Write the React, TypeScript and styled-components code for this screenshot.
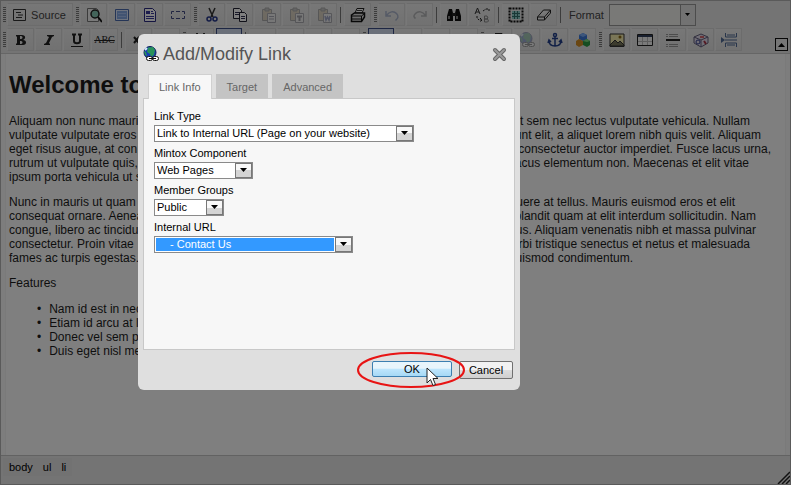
import React from "react";
import styled, { createGlobalStyle, css } from "styled-components";

const GlobalStyle = createGlobalStyle`
  * { box-sizing: border-box; }
  body { margin: 0; background: #fff; font-family: "Liberation Sans", Arial, sans-serif; font-size: 12px; color: #1c1c1c; }
`;

const Editor = styled.div`
  position: relative;
  display: flex;
  flex-direction: column;
  min-height: 100vh;
  border: 1px solid #b4b4b4;
  background: #e9e9e9;
`;

const Toolbar = styled.header`
  display: flex;
  align-items: flex-end;
  padding: 2px 2px 2px 0;
  border-bottom: 1px solid #cccccc;
`;

const ToolRows = styled.div`
  display: flex;
  flex: 1;
  flex-direction: column;
  gap: 2px;
  min-width: 0;
`;

const ToolRow = styled.div`
  display: flex;
  align-items: center;
  height: 23px;
`;

const Handle = styled.span`
  flex: none;
  width: 3px;
  height: 16px;
  margin: 0 1px 0 2px;
  background: repeating-linear-gradient(to bottom, #787878 0 1px, #e6e6e6 1px 2px);
`;

const Divider = styled.span`
  flex: none;
  width: 1px;
  height: 16px;
  margin: 0 3px 0 2px;
  background: #787878;
`;

const ToolButton = styled.button<{ $active?: boolean; $faded?: boolean }>`
  display: flex;
  flex: none;
  align-items: center;
  justify-content: center;
  width: 27px;
  height: 23px;
  margin: 0 1px 0 0;
  padding: 0;
  border: 1px solid #d8d8d8;
  border-left-color: #f0f0f0;
  background: linear-gradient(#efefef, #e3e3e3);
  svg { opacity: ${(p) => (p.$faded ? 0.35 : 1)}; }
  ${(p) =>
    p.$active &&
    css`
      width: 26px;
      margin: 0 1px;
      border: 1px solid #3d4f86;
      background: #d5def2;
    `}
`;

const SourceButton = styled(ToolButton)`
  gap: 4px;
  width: 66px;
  padding-right: 2px;
  color: #444;
  font: 11px "Liberation Sans", Arial, sans-serif;
`;

const Format = styled.label`
  display: flex;
  align-items: center;
  gap: 5px;
  margin-left: 5px;
  color: #444;
  font-size: 11px;
`;

const FormatBox = styled.span`
  display: flex;
  align-items: center;
  width: 87px;
  height: 22px;
  border: 1px solid #999;
  background: #f2f2ee;
`;

const FormatSelect = styled.select`
  flex: 1;
  min-width: 0;
  height: 20px;
  border: 0;
  appearance: none;
  background: transparent;
`;

const FormatArrow = styled.span`
  display: flex;
  align-items: center;
  justify-content: center;
  width: 15px;
  height: 20px;
  border-left: 1px solid #999;
  background: #e4e4e4;
  pointer-events: none;
`;

const Collapse = styled.button`
  display: flex;
  align-items: center;
  justify-content: center;
  width: 13px;
  height: 13px;
  padding: 0;
  border: 1px solid #111;
  background: #ececec;
`;

const Page = styled.main`
  flex: 1;
  margin: 0 4px;
  padding: 0 3px;
  background: #fff;
  border: solid #f4f4f4;
  border-width: 0 1px;
  box-shadow: -4px 0 #fafafa, 4px 0 #fafafa;
  line-height: 14px;
  white-space: nowrap;
`;

const Heading = styled.h1`
  margin: 0;
  padding: 17px 0 15px;
  font-size: 24px;
  line-height: 28px;
`;

const Paragraph = styled.p`
  margin: 0 0 11px;
`;

const Line = styled.span<{ $rag: number }>`
  display: flex;
  justify-content: space-between;
  padding-right: ${(p) => p.$rag}px;
`;

const List = styled.ul`
  margin: 12px 0 0;
  padding: 0 0 0 28px;
  list-style: none;
  line-height: 14px;
  li { display: flex; gap: 8px; }
  li::before { content: "•"; }
`;

const PathBar = styled.footer`
  display: flex;
  height: 29px;
  padding: 2px;
  border-top: 1px solid #c4c4c4;
  font-size: 11px;
  line-height: 18px;
`;

const PathTrail = styled.nav`
  display: flex;
  gap: 10px;
  height: 18px;
  padding: 0 6px;
  background: #e4e4e4;
  a { color: #000; text-decoration: none; }
`;

const Grip = styled.svg`
  align-self: flex-end;
  margin: 0 -2px -2px auto;
`;

const Backdrop = styled.div`
  position: absolute;
  inset: -1px;
  display: flex;
  align-items: flex-start;
  padding: 34px 0 0 138px;
  background: rgba(0, 0, 0, 0.5);
`;

const Dialog = styled.section`
  width: 382px;
  padding: 0 5px 11px;
  border-radius: 6px;
  background: #dfdfdf;
  color: #000;
  font-size: 11px;
`;

const DialogHead = styled.div`
  display: flex;
  align-items: center;
  height: 40px;
  padding-right: 8px;
`;

const DialogTitle = styled.h2`
  flex: 1;
  margin: 0 0 0 4px;
  color: #555;
  font-size: 18px;
  font-weight: 400;
  line-height: 24px;
`;

const CloseButton = styled.button`
  display: flex;
  width: 16px;
  height: 16px;
  padding: 0;
  border: 0;
  background: none;
`;

const Tabs = styled.div`
  display: flex;
  gap: 4px;
  padding-left: 5px;
`;

const Tab = styled.button<{ $current?: boolean }>`
  height: ${(p) => (p.$current ? 25 : 24)}px;
  margin-bottom: -1px;
  padding: 0 10px;
  border: 1px solid ${(p) => (p.$current ? "#d0d0d0" : "#c4c4c4")};
  border-bottom: 0;
  background: ${(p) => (p.$current ? "#f7f7f7" : "#c4c4c4")};
  color: #666;
  font: 11px "Liberation Sans", Arial, sans-serif;
  z-index: 1;
`;

const Panel = styled.div`
  height: 252px;
  padding: 9px 10px;
  border: 1px solid #c8c8c8;
  background: #f7f7f7;
`;

const Field = styled.label`
  display: flex;
  flex-direction: column;
  gap: 1px;
  margin-bottom: 3px;
  line-height: 16px;
`;

const SelectBox = styled.span<{ $width: number }>`
  display: flex;
  width: ${(p) => p.$width}px;
  height: 17px;
  border: 1px solid #8a8a8a;
  background: #fff;
`;

const Select = styled.select<{ $chosen?: boolean }>`
  flex: 1;
  min-width: 0;
  margin: ${(p) => (p.$chosen ? 1 : 0)}px;
  padding: 0 0 0 ${(p) => (p.$chosen ? 14 : 2)}px;
  border: 0;
  outline: 0;
  appearance: none;
  background: ${(p) => (p.$chosen ? "#3399ff" : "#fff")};
  color: ${(p) => (p.$chosen ? "#fff" : "#000")};
  font: 11px "Liberation Sans", Arial, sans-serif;
  line-height: ${(p) => (p.$chosen ? 13 : 15)}px;
`;

const SelectArrow = styled.span`
  display: flex;
  align-items: center;
  justify-content: center;
  width: 17px;
  border: 1px solid #777;
  background: linear-gradient(#f8f8f8 50%, #d4d4d4 50%);
  pointer-events: none;
`;

const Actions = styled.div`
  position: relative;
  display: flex;
  justify-content: flex-end;
  align-items: flex-start;
  gap: 7px;
  padding: 11px 2px 0;
`;

const ActionButton = styled.button<{ $primary?: boolean }>`
  width: ${(p) => (p.$primary ? 80 : 54)}px;
  height: ${(p) => (p.$primary ? 16 : 18)}px;
  padding: 0;
  border: 1px solid ${(p) => (p.$primary ? "#3c7fb1" : "#707070")};
  border-radius: 2px;
  background: ${(p) =>
    p.$primary
      ? "linear-gradient(#e8f5fc 0 45%, #bee6fd 50%, #a7d9f5)"
      : "linear-gradient(#f2f2f2 0 48%, #dddddd 50%, #cfcfcf)"};
  color: #000;
  font: 11px/14px "Liberation Sans", Arial, sans-serif;
`;

const Ring = styled.svg`
  position: absolute;
  top: 1px;
  right: 49px;
  pointer-events: none;
`;

const Pointer = styled.svg`
  position: absolute;
  top: 17px;
  right: 76px;
  pointer-events: none;
`;

const Svg = ({ children, w = 16 }: { children: React.ReactNode; w?: number }) => (
  <svg width={w} height="16" viewBox={`0 0 ${w} 16`} fill="none" aria-hidden="true">
    {children}
  </svg>
);

const Down = ({ small }: { small?: boolean }) => (
  <svg width="9" height="5" viewBox="0 0 9 5" aria-hidden="true">
    <path d={small ? "M2 1h5L4.500 4z" : "M1 0h7L4.500 4z"} fill="#000" />
  </svg>
);

const clipboard = (
  <>
    <path d="M2.500 2.500h9v11h-9z" fill="#c8b080" stroke="#444" />
    <path d="M5 1h4v3H5z" fill="#888" stroke="#444" />
    <path d="M7.500 6.500h8v9h-8z" fill="#fff" stroke="#445" />
  </>
);

const globe = (
  <>
    <circle cx="7" cy="6.500" r="6" fill="#163cb4" stroke="#0d1c58" />
    <path d="M5 1.500l5-.5 2 3-1 5-3 2-1-3-3-2zM1 5l2 1 1 4-2-1z" fill="#28925a" />
    <path d="M2 4l2-2" stroke="#d6eaff" strokeWidth="2" />
    <rect x="3.500" y="10.500" width="6" height="4" rx="2" fill="#fff" stroke="#111" />
    <rect x="9.500" y="10.500" width="6" height="4" rx="2" fill="#fff" stroke="#111" />
    <path d="M6 12.500h7" stroke="#111" />
  </>
);

const icons: Record<string, React.ReactNode> = {
  source: <><path d="M1.500 2.500h12v11h-12z" stroke="#333" /><path d="M4 5.500h5M6 8h5M4 10.500h6" stroke="#333" /></>,
  preview: <><path d="M1.500 1.500h9l2 2v11h-11z" fill="#f4f4f4" stroke="#777" /><circle cx="9" cy="7" r="4" fill="#86c8b4" stroke="#222" strokeWidth="1.500" /><path d="M12 10l4 5" stroke="#111" strokeWidth="2" /></>,
  template: <><path d="M1.500 2.500h13v11h-13z" fill="#dfe9ff" stroke="#4a6aac" /><path d="M3 4h10v8H3z" fill="#84a8e4" /><path d="M4 6.500h8M4 9.500h8" stroke="#a9c3f4" /></>,
  page: <><path d="M2.500 1.500h8l3 3v10h-11z" fill="#fff" stroke="#2b2b82" /><path d="M4 4h4v3H4z" fill="#39399c" /><path d="M4 9.500h8M4 11.500h8M9 6.500h3M9 4.500h2" stroke="#39399c" /></>,
  frame: <path d="M4 4.500H1.500V7m0 2v2.500H4m8-7h2.500V7m0 2v2.500H12M6 4.500h4M6 11.500h4" stroke="#444c84" />,
  cut: <><path d="M5 1l4 9M11 1L7 10" stroke="#333" strokeWidth="1.500" /><circle cx="5" cy="12" r="2" stroke="#24368a" strokeWidth="1.500" /><circle cx="11" cy="12" r="2" stroke="#24368a" strokeWidth="1.500" /></>,
  copy: <><path d="M1.500 1.500h6l2 2v8h-8z" fill="#fff" stroke="#223" /><path d="M3 5.500h5M3 7.500h5" stroke="#335" /><path d="M7.500 5.500h5l2 2v7h-7z" fill="#fff" stroke="#223" /><path d="M9 9.500h4M9 11.500h4" stroke="#335" /></>,
  paste: <>{clipboard}<path d="M9 9.500h5M9 12h5" stroke="#335" /></>,
  pasteText: <>{clipboard}<path d="M9 9.500h5M11.500 9v5" stroke="#223" strokeWidth="2" /></>,
  pasteWord: <>{clipboard}<path d="M9 9l1 4 1.500-3 1.500 3 1-4" stroke="#24368a" strokeWidth="1.500" /></>,
  print: <><path d="M5 6l2-4.500h7L12 6z" fill="#fff" stroke="#222" /><path d="M7 3.500h5" stroke="#444" /><path d="M1.500 8l3-2h10v4l-3 4.500h-10z" fill="#ddd" stroke="#111" strokeWidth="1.500" /><path d="M2 9h9.500l3-2.500M2 12h9M11.500 9v5" stroke="#111" /></>,
  undo: <path d="M2 4v5h5M2.500 8.500c3-4 7-5 10-2s1 5-1 7" stroke="#3a5598" strokeWidth="1.500" />,
  redo: <path d="M14 4v5H9m4.500-.5c-3-4-7-5-10-2s-1 4 0 5" stroke="#55585e" strokeWidth="1.500" />,
  find: <><path d="M3 2h3l1 4v8H1V9zM10 2h3l2 7v5H9V6z" fill="#111" /><path d="M6 6h4v3H6z" fill="#222" /><path d="M3 9v3M11 9v3" stroke="#fff" /></>,
  replace: <><path d="M1 7l2.500-6L6 7M2 5h3" stroke="#333" /><path d="M10.500 9v6h3l1-1-1-2h-3 2.500l1-1-1-2z" stroke="#888" /><path d="M9 4l3-2m0 0h3v3M3 9v2l2 2h3m-2-2l2 2-2 2" stroke="#222" strokeDasharray="2 1" /></>,
  select: <><path d="M1.500 1.500h13v13h-13z" stroke="#111" strokeWidth="2" strokeDasharray="2 1" /><path d="M4 4h8v8H4z" fill="#8fcfcb" /><path d="M4 6.500h8M4 9.500h8M6.500 4v8M9.500 4v8" stroke="#33706c" /></>,
  eraser: <path d="M1.500 10l6-7h7l-6 7zM1.500 10v3h7l6-7V3M8.500 10v3" fill="#f5f5f5" stroke="#222" />,
  bold: <path d="M3 3h6c4 0 4 4 1 5 4 0 4 5 0 5H3v-1l1-1V5L3 4zm4 1v3h1c2 0 2-3 0-3zm0 5v3h1c2 0 2-3 0-3z" fill="#222" fillRule="evenodd" />,
  italic: <path d="M6 3h7v1l-2 1-3 6 1 1v1H3v-1l2-1 3-6-2-1z" fill="#222" />,
  underline: <><path d="M3 2.500h4m2 0h4M5 3v6c0 3 6 3 6 0V3" stroke="#222" strokeWidth="2" /><path d="M2 14.500h12" stroke="#222" /></>,
  sub: <path d="M3 5l5 6M8 5l-5 6" stroke="#222" strokeWidth="2" />,
  peak: <path d="M3 1.500h2M10 1.500h2" stroke="#333" />,
  link: <path d="M4 1.500h7l2 2v3" stroke="#222" />,
  globe,
  anchor: <><circle cx="8" cy="3" r="1.500" stroke="#24418c" strokeWidth="1.500" /><path d="M8 5v9M5 6.500h6M2 8.500c0 4 3 5.500 6 5.500s6-1.500 6-5.500M1 11l1-3 2 2m11 1l-1-3-2 2" stroke="#24418c" strokeWidth="1.500" /></>,
  cubes: <><path d="M4 3l4-2 4 2v4L8 9 4 7z" fill="#3d78d8" /><path d="M4 3l4 2 4-2-4-2z" fill="#7caef8" /><path d="M1 9l3-2 4 2v4l-4 2-3-2z" fill="#d48f27" /><path d="M8 9l4-2 3 2v4l-3 2-4-2z" fill="#2d9a45" /><path d="M8 9l4 1 3-1-3-2z" fill="#7fdc80" /></>,
  image: <><path d="M1 2h14v12.500H1z" fill="#f5ecae" stroke="#333" /><circle cx="11" cy="5" r="1.500" fill="#8b6a16" /><path d="M1 13l5-5 3 3 2-2 4 4v1H1z" fill="#78765b" stroke="#333" /></>,
  table: <><path d="M.5 2.500h15v11H.5z" fill="#f5f5f5" stroke="#222" /><path d="M1 3h14v2H1z" fill="#33415f" /><path d="M1 9.500h14M5.500 5v8M10.500 5v8" stroke="#bbb" /></>,
  rule: <><path d="M1 8h14" stroke="#222" strokeWidth="2" /><path d="M1 2.500h2m1 0h9M1 4.500h2m1 0h9M1 12.500h2m1 0h9M1 14.500h2m1 0h9" stroke="#999" /></>,
  box: <><path d="M1 5l7-3 7 3v6l-7 4-7-4z" fill="#e3dced" stroke="#65617e" /><path d="M1 5l7 3 7-3M8 8v7" stroke="#65617e" /><path d="M7 4h4v2H7z" fill="#d66b72" /><circle cx="5" cy="10" r="2" stroke="#35438d" /><path d="M11 9l2 3" stroke="#ab3546" strokeWidth="2" /></>,
  break: <><path d="M4.500 1v4h11V1M4.500 15v-4h11v4M4 8h12M6 3h8M6 13h8" stroke="#506b96" /><path d="M0 5l4 3-4 3z" fill="#506b96" /></>,
};

type Tool = string | { icon: string; faded?: boolean; active?: boolean };

const ToolSet = ({ tools }: { tools: Tool[] }) => (
  <>
    {tools.map((t, i) => {
      if (t === "|") return <Divider key={i} />;
      if (t === ":") return <Handle key={i} />;
      const tool = typeof t === "string" ? { icon: t } : t;
      return (
        <ToolButton key={i} type="button" aria-label={tool.icon} $active={tool.active} $faded={tool.faded}>
          <Svg>{icons[tool.icon]}</Svg>
        </ToolButton>
      );
    })}
  </>
);

const Strike = styled.s`
  color: #222;
  font: 10px "Liberation Serif", serif;
`;

const faded = (icon: string) => ({ icon, faded: true });
const active = { icon: "", active: true };

const firstRow: Tool[] = [
  ":", "preview", "template", "page", "frame", ":", "cut", "copy", faded("paste"), faded("pasteText"), faded("pasteWord"),
  "|", "print", ":", faded("undo"), faded("redo"), "|", "find", "replace", "|", "select", "eraser", "|",
];
const secondRow: Tool[] = [
  "|", "sub", "", ":", "peak", active, "|", "", "", "", "", ":", active, "", "", "", ":", "link", faded("globe"),
  "anchor", "cubes", ":", "image", "table", "rule", "box", "break",
];

const paragraphs: [string, string, number][][] = [
  [
    ["Aliquam non nunc mauris", "sit sem nec lectus vulputate vehicula. Nullam", 32],
    ["vulputate vulputate eros", "tincidunt elit, a aliquet lorem nibh quis velit. Aliquam", 21],
    ["eget risus augue, at con", "consectetur auctor imperdiet. Fusce lacus urna,", 11],
    ["rutrum ut vulputate quis,", "lacus elementum non. Maecenas et elit vitae", 33],
    ["ipsum porta vehicula ut s", "", 0],
  ],
  [
    ["Nunc in mauris ut quam", "posuere at tellus. Mauris euismod eros et elit", 47],
    ["consequat ornare. Aenea", "blandit quam at elit interdum sollicitudin. Nam", 26],
    ["congue, libero ac tincidu", "lacus. Aliquam venenatis nibh et massa pulvinar", 26],
    ["consectetur. Proin vitae", "morbi tristique senectus et netus et malesuada", 32],
    ["fames ac turpis egestas.", "euismod condimentum.", 149],
  ],
];

const Choice = ({ label, value, width, chosen }: { label: string; value: string; width: number; chosen?: boolean }) => (
  <Field>
    {label}
    <SelectBox $width={width}>
      <Select $chosen={chosen} defaultValue={value}>
        <option>{value}</option>
      </Select>
      <SelectArrow><Down /></SelectArrow>
    </SelectBox>
  </Field>
);

export default function App() {
  return (
    <Editor>
      <GlobalStyle />
      <Toolbar>
        <ToolRows>
          <ToolRow>
            <Handle />
            <SourceButton type="button"><Svg w={15}>{icons.source}</Svg>Source</SourceButton>
            <ToolSet tools={firstRow} />
            <Format>
              Format
              <FormatBox>
                <FormatSelect defaultValue=""><option value="" /></FormatSelect>
                <FormatArrow><Down small /></FormatArrow>
              </FormatBox>
            </Format>
          </ToolRow>
          <ToolRow>
            <ToolSet tools={[":", "bold", "italic", "underline"]} />
            <ToolButton type="button"><Strike>ABC</Strike></ToolButton>
            <ToolSet tools={secondRow} />
          </ToolRow>
        </ToolRows>
        <Collapse type="button" aria-label="Collapse toolbar">
          <svg width="7" height="4" viewBox="0 0 7 4"><path d="M0 4h7L3.500 0z" fill="#000" /></svg>
        </Collapse>
      </Toolbar>
      <Page>
        <Heading>Welcome to</Heading>
        {paragraphs.map((lines, i) => (
          <Paragraph key={i}>
            {lines.map(([start, end, rag]) => (
              <Line key={start} $rag={rag}><span>{start}</span><span>{end}</span></Line>
            ))}
          </Paragraph>
        ))}
        <Paragraph>Features</Paragraph>
        <List>
          <li>Nam id est in nec</li>
          <li>Etiam id arcu at l</li>
          <li>Donec vel sem p</li>
          <li>Duis eget nisl me</li>
        </List>
      </Page>
      <PathBar>
        <PathTrail>
          <a href="#body">body</a>
          <a href="#ul">ul</a>
          <a href="#li">li</a>
        </PathTrail>
        <Grip width="13" height="13" viewBox="0 0 13 13" aria-hidden="true">
          <path d="M1 13L13 1M5 13l8-8M9 13l4-4" stroke="#222" strokeWidth="1.500" />
        </Grip>
      </PathBar>
      <Backdrop>
        <Dialog role="dialog" aria-labelledby="dialog-title">
          <DialogHead>
            <Svg>{globe}</Svg>
            <DialogTitle id="dialog-title">Add/Modify Link</DialogTitle>
            <CloseButton type="button" aria-label="Close">
              <Svg>
                <path d="M4 4l9 9M13 4l-9 9" stroke="#666" strokeWidth="4" strokeLinecap="round" />
                <path d="M4 4l9 9M13 4l-9 9" stroke="#999" strokeWidth="2" strokeLinecap="round" />
              </Svg>
            </CloseButton>
          </DialogHead>
          <Tabs role="tablist">
            <Tab type="button" role="tab" aria-selected="true" $current>Link Info</Tab>
            <Tab type="button" role="tab" aria-selected="false">Target</Tab>
            <Tab type="button" role="tab" aria-selected="false">Advanced</Tab>
          </Tabs>
          <Panel role="tabpanel">
            <Choice label="Link Type" value="Link to Internal URL (Page on your website)" width={260} />
            <Choice label="Mintox Component" value="Web Pages" width={99} />
            <Choice label="Member Groups" value="Public" width={70} />
            <Choice label="Internal URL" value="- Contact Us" width={199} chosen />
          </Panel>
          <Actions>
            <ActionButton type="button" $primary>OK</ActionButton>
            <ActionButton type="button">Cancel</ActionButton>
            <Ring width="110" height="38" viewBox="0 0 110 38" aria-hidden="true">
              <ellipse cx="55" cy="19" rx="53" ry="17" fill="none" stroke="#e81414" strokeWidth="2" />
            </Ring>
            <Pointer width="13" height="20" viewBox="0 0 13 20" aria-hidden="true">
              <path d="M1 1v15l3.500-3.500L7 18.500l2.500-1L7 11.500h5z" fill="#fff" stroke="#222" />
            </Pointer>
          </Actions>
        </Dialog>
      </Backdrop>
    </Editor>
  );
}
